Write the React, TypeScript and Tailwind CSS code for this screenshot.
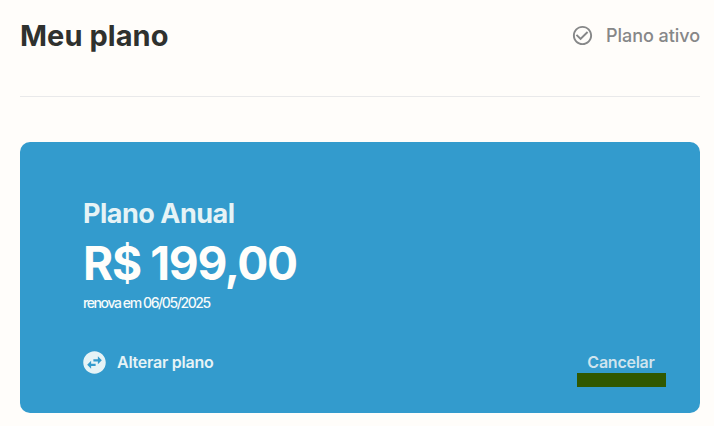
import type { ReactNode } from "react";
import { MdCheckCircleOutline, MdSwapHorizontalCircle } from "react-icons/md";

interface PlanCardProps {
  name: string;
  price: string;
  renewal: string;
  children: ReactNode;
}

function PlanCard({ name, price, renewal, children }: PlanCardProps) {
  return (
    <section className="mt-[45px] h-[271px] rounded-[10px] bg-[#339bcd] pt-[54px] pr-[34px] pl-[63px]">
      <h2 className="text-[27px] leading-9 font-bold tracking-[-0.5px] text-[#e6f3f6]">
        {name}
      </h2>
      <p className="mt-[3px] text-[46px] leading-[56px] font-bold tracking-[-1.3px] text-[#fffefb]">
        {price}
      </p>
      <p className="mt-0.5 text-sm leading-5 font-medium tracking-[-1.4px] text-[#f5fafa]">
        {renewal}
      </p>
      {children}
    </section>
  );
}

export default function App() {
  return (
    <main className="h-[426px] overflow-hidden bg-[#fffdfa] pr-3.5 pl-5 font-['Inter',sans-serif]">
      <header className="flex h-[97px] items-start justify-between border-b border-[#e9e9ea] pt-4">
        <h1 className="text-[29px] leading-10 font-bold tracking-[0.05px] text-[#2f312e]">
          Meu plano
        </h1>
        <div className="flex h-10 items-center gap-3 text-lg font-medium tracking-[-0.05px] text-[#868788]">
          <MdCheckCircleOutline className="-mt-px size-[23px]" />
          <span>Plano ativo</span>
        </div>
      </header>

      <PlanCard
        name="Plano Anual"
        price="R$ 199,00"
        renewal="renova em 06/05/2025"
      >
        <div className="mt-[34px] flex items-start justify-between text-base font-semibold tracking-[-0.25px] text-[#e6f3f6]">
          <button className="-ml-0.5 flex h-[30px] items-center gap-[9px]">
            <MdSwapHorizontalCircle className="size-[27px]" />
            <span>Alterar plano</span>
          </button>
          <div className="flex w-[89px] flex-col items-center pt-px">
            <button className="h-[25px] pt-0.5 pr-px text-[#cfe4ee]">
              Cancelar
            </button>
            <span className="h-3.5 w-full bg-[#305800]" />
          </div>
        </div>
      </PlanCard>
    </main>
  );
}
